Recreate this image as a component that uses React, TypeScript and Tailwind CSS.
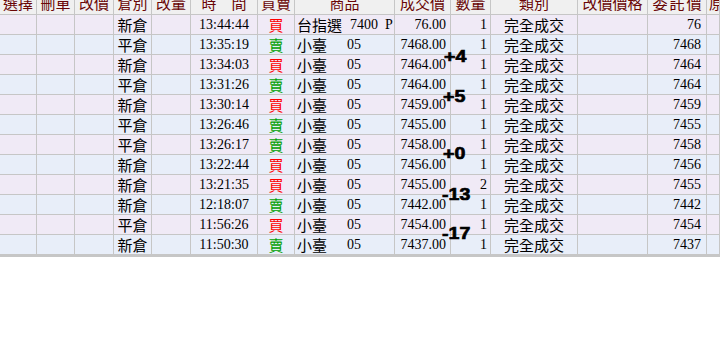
import React from "react";

type Row = {
  pos: string;
  time: string;
  bs: "買" | "賣";
  prod: string;
  month: string;
  price: string;
  qty: string;
  order: string;
};

const rows: Row[] = [
  { pos: "新倉", time: "13:44:44", bs: "買", prod: "台指選", month: "7400\u00a0\u00a0P", price: "76.00", qty: "1", order: "76" },
  { pos: "平倉", time: "13:35:19", bs: "賣", prod: "小臺", month: "05", price: "7468.00", qty: "1", order: "7468" },
  { pos: "新倉", time: "13:34:03", bs: "買", prod: "小臺", month: "05", price: "7464.00", qty: "1", order: "7464" },
  { pos: "平倉", time: "13:31:26", bs: "賣", prod: "小臺", month: "05", price: "7464.00", qty: "1", order: "7464" },
  { pos: "新倉", time: "13:30:14", bs: "買", prod: "小臺", month: "05", price: "7459.00", qty: "1", order: "7459" },
  { pos: "平倉", time: "13:26:46", bs: "賣", prod: "小臺", month: "05", price: "7455.00", qty: "1", order: "7455" },
  { pos: "平倉", time: "13:26:17", bs: "賣", prod: "小臺", month: "05", price: "7458.00", qty: "1", order: "7458" },
  { pos: "新倉", time: "13:22:44", bs: "買", prod: "小臺", month: "05", price: "7456.00", qty: "1", order: "7456" },
  { pos: "新倉", time: "13:21:35", bs: "買", prod: "小臺", month: "05", price: "7455.00", qty: "2", order: "7455" },
  { pos: "新倉", time: "12:18:07", bs: "賣", prod: "小臺", month: "05", price: "7442.00", qty: "1", order: "7442" },
  { pos: "平倉", time: "11:56:26", bs: "買", prod: "小臺", month: "05", price: "7454.00", qty: "1", order: "7454" },
  { pos: "新倉", time: "11:50:30", bs: "賣", prod: "小臺", month: "05", price: "7437.00", qty: "1", order: "7437" },
];

const headers: { t: string; c?: string }[] = [
  { t: "選擇" },
  { t: "刪單" },
  { t: "改價" },
  { t: "倉別" },
  { t: "改量" },
  { t: "時\u3000間" },
  { t: "買賣" },
  { t: "商品" },
  { t: "成交價" },
  { t: "數量" },
  { t: "類別" },
  { t: "改價價格" },
  { t: "委託價", c: " tracking-[2px] pl-[2px]" },
  { t: "原", c: " pl-[2px]" },
];

const gridCols =
  "grid grid-cols-[37px_38px_39px_38px_39px_67px_37px_100px_56px_40px_87px_70px_59px_1fr]";

const cjk = "font-['Noto_Sans_CJK_TC',sans-serif] text-[15px]";
const num = "font-['Liberation_Serif','Noto_Sans_CJK_TC',serif] text-[14px]";

const cell = "border-r border-b border-[#c6c6c6] h-[20px] flex items-center overflow-hidden whitespace-nowrap";

const mark =
  "absolute font-['Liberation_Sans',sans-serif] font-bold text-[17px] leading-none scale-x-[1.15] origin-left [-webkit-text-stroke:0.7px_black]";

export default function App() {
  return (
    <div className="relative w-[720px] h-[348px] bg-white overflow-hidden text-black">
      <div className={gridCols + " bg-[#f0f0f0]"}>
        {headers.map((h, i) => (
          <div
            key={i}
            className={
              "border-r border-b border-[#c6c6c6] h-[15px] overflow-hidden flex items-end " +
              (i === 13 ? "justify-start" : "justify-center")
            }
          >
            <span className={cjk + " leading-[17px] text-[#6a0606] mb-[3px] whitespace-nowrap" + (h.c ?? "")}>
              {h.t}
            </span>
          </div>
        ))}
      </div>
      {rows.map((r, i) => (
        <div key={i} className={gridCols + (i % 2 === 0 ? " bg-[#f0eaf6]" : " bg-[#e8eef9]")}>
          <div className={cell}></div>
          <div className={cell}></div>
          <div className={cell}></div>
          <div className={cell + " justify-center " + cjk + " leading-none"}>{r.pos}</div>
          <div className={cell}></div>
          <div className={cell + " justify-center " + num}>{r.time}</div>
          <div
            className={
              cell +
              " justify-center leading-none " +
              cjk +
              (r.bs === "買" ? " text-[#ff0000]" : " text-[#00a000]")
            }
          >
            {r.bs}
          </div>
          <div className={cell + " pl-[2px]"}>
            <span className={cjk + " leading-none shrink-0 " + (i === 0 ? "w-[53px]" : "w-[50px]")}>{r.prod}</span>
            <span className={num}>{r.month}</span>
          </div>
          <div className={cell + " justify-end pr-[4px] " + num}>{r.price}</div>
          <div className={cell + " justify-end pr-[3px] " + num}>{r.qty}</div>
          <div className={cell + " justify-center " + cjk + " leading-none"}>完全成交</div>
          <div className={cell}></div>
          <div className={cell + " justify-end pr-[5px] " + num}>{r.order}</div>
          <div className={cell}></div>
        </div>
      ))}
      <div className="h-[2px] bg-[#c6c6c6]"></div>

      <div className={mark + " left-[444px] top-[48px]"}>+4</div>
      <div className={mark + " left-[443px] top-[88px]"}>+5</div>
      <div className={mark + " left-[443px] top-[145px]"}>+0</div>
      <div className={mark + " left-[442px] top-[186px]"}>-13</div>
      <div className={mark + " left-[442px] top-[225px]"}>-17</div>
    </div>
  );
}
